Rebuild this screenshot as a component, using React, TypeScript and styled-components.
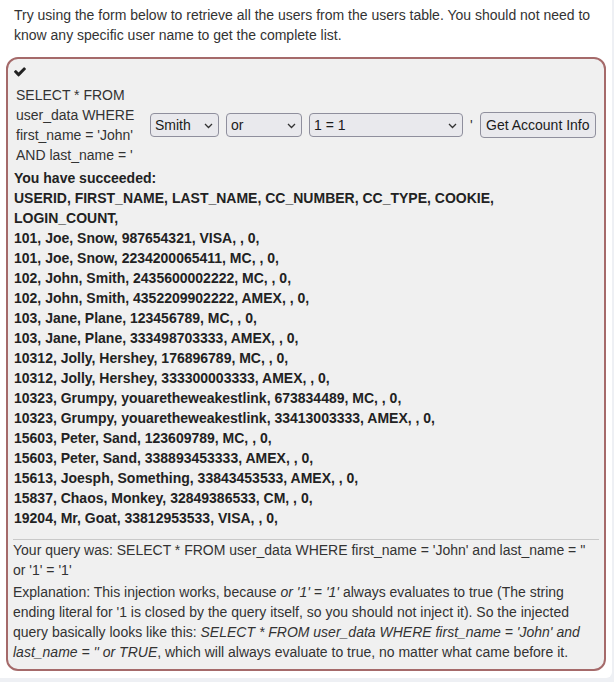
import React from "react";
import styled, { createGlobalStyle } from "styled-components";

const Global = createGlobalStyle`
  html, body { margin: 0; padding: 0; }
  body {
    background: #eef0f4;
    font-family: "Liberation Sans Narrow", "Arial Narrow", "Liberation Sans", Arial, sans-serif;
    font-size: 14px;
    color: #333;
  }
`;

const Panel = styled.div`
  width: 612px;
  box-sizing: border-box;
  background: #ffffff;
  padding: 5px 0 7px 0;
  border-radius: 0 0 6px 0;
`;

const Intro = styled.p`
  margin: 0 0 12px 0;
  padding: 0 14px;
  line-height: 20px;
`;

const AttackBox = styled.div`
  margin: 0 6px;
  border: 2px solid #a56a6a;
  border-radius: 12px;
  background: #f0f0f0;
  padding: 3px 5px 7px 5px;
`;

const CheckLine = styled.div`
  height: 20px;
  display: flex;
  align-items: center;
  padding-left: 1px;
  margin-bottom: 3px;
  color: #222;
`;

const FormRow = styled.div`
  display: flex;
  align-items: center;
  gap: 7px;
  padding-left: 3px;
`;

const QueryLabel = styled.div`
  width: 130px;
  line-height: 20px;
  margin-right: -3px;
`;

const SelectWrap = styled.div<{ $w: number }>`
  position: relative;
  width: ${(p) => p.$w}px;
  height: 24px;
`;

const Select = styled.select`
  appearance: none;
  -webkit-appearance: none;
  width: 100%;
  height: 100%;
  box-sizing: border-box;
  margin: 0;
  background: #e9e9ed;
  border: 1px solid #8f8f9d;
  border-radius: 4px;
  padding: 0 0 0 4px;
  font-family: "Liberation Sans", Arial, sans-serif;
  font-size: 14px;
  color: #1b1b1b;
`;

const Chevron = styled.svg`
  position: absolute;
  right: 6px;
  top: 10px;
  width: 9px;
  height: 6px;
  pointer-events: none;
`;

const Quote = styled.span`
  width: 3px;
  line-height: 20px;
`;

const Button = styled.button`
  height: 26px;
  margin: 0;
  box-sizing: border-box;
  background: #e9e9ed;
  border: 1px solid #8f8f9d;
  border-radius: 4px;
  padding: 0 5px;
  font-family: "Liberation Sans", Arial, sans-serif;
  font-size: 14px;
  color: #1b1b1b;
`;

const Results = styled.div`
  margin-top: 3px;
  font-family: "Liberation Sans", Arial, sans-serif;
  font-weight: bold;
  font-size: 14px;
  line-height: 20px;
  color: #222;
  padding-left: 1px;
`;

const Rule = styled.hr`
  margin: 11px 0 0 0;
  border: 0;
  border-top: 1px solid #c9c9c9;
  height: 0;
`;

const Output = styled.div`
  line-height: 20px;
`;

const Explanation = styled.div`
  margin-top: 2px;
  line-height: 20px;
`;

const rows = [
  "101, Joe, Snow, 987654321, VISA, , 0,",
  "101, Joe, Snow, 2234200065411, MC, , 0,",
  "102, John, Smith, 2435600002222, MC, , 0,",
  "102, John, Smith, 4352209902222, AMEX, , 0,",
  "103, Jane, Plane, 123456789, MC, , 0,",
  "103, Jane, Plane, 333498703333, AMEX, , 0,",
  "10312, Jolly, Hershey, 176896789, MC, , 0,",
  "10312, Jolly, Hershey, 333300003333, AMEX, , 0,",
  "10323, Grumpy, youaretheweakestlink, 673834489, MC, , 0,",
  "10323, Grumpy, youaretheweakestlink, 33413003333, AMEX, , 0,",
  "15603, Peter, Sand, 123609789, MC, , 0,",
  "15603, Peter, Sand, 338893453333, AMEX, , 0,",
  "15613, Joesph, Something, 33843453533, AMEX, , 0,",
  "15837, Chaos, Monkey, 32849386533, CM, , 0,",
  "19204, Mr, Goat, 33812953533, VISA, , 0,",
];

function ChevronIcon() {
  return (
    <Chevron viewBox="0 0 9 6">
      <path d="M1 1 L4.5 4.5 L8 1" fill="none" stroke="#333" strokeWidth="1.3" />
    </Chevron>
  );
}

function Dropdown({ w, value, options }: { w: number; value: string; options: string[] }) {
  return (
    <SelectWrap $w={w}>
      <Select defaultValue={value}>
        {options.map((o, i) => (
          <option key={i} value={o}>
            {o}
          </option>
        ))}
      </Select>
      <ChevronIcon />
    </SelectWrap>
  );
}

export default function App() {
  return (
    <>
      <Global />
      <Panel>
        <Intro>
          Try using the form below to retrieve all the users from the users table. You should not need to
          know any specific user name to get the complete list.
        </Intro>
        <AttackBox>
          <CheckLine>
            <svg width="12" height="12" viewBox="120 300 1560 1300">
              <path
                fill="#222"
                d="M1671 566q0 40-28 68l-724 724-136 136q-28 28-68 28t-68-28l-136-136-362-362q-28-28-28-68t28-68l136-136q28-28 68-28t68 28l294 295 656-657q28-28 68-28t68 28l136 136q28 28 28 68z"
              />
            </svg>
          </CheckLine>
          <FormRow>
            <QueryLabel>SELECT * FROM user_data WHERE first_name = 'John' AND last_name = '</QueryLabel>
            <Dropdown w={69} value="Smith" options={["Smith", "'"]} />
            <Dropdown w={76} value="or" options={["or", "and"]} />
            <Dropdown w={154} value="1 = 1" options={["1 = 1", "1 = 2"]} />
            <Quote>'</Quote>
            <Button>Get Account Info</Button>
          </FormRow>
          <Results>
            <div>You have succeeded:</div>
            <div>USERID, FIRST_NAME, LAST_NAME, CC_NUMBER, CC_TYPE, COOKIE, LOGIN_COUNT,</div>
            {rows.map((r, i) => (
              <div key={i}>{r}</div>
            ))}
          </Results>
          <Rule />
          <Output>
            Your query was: SELECT * FROM user_data WHERE first_name = 'John' and last_name = '' or '1' = '1'
          </Output>
          <Explanation>
            Explanation: This injection works, because <i>or '1' = '1'</i> always evaluates to true (The string
            ending literal for '1 is closed by the query itself, so you should not inject it). So the injected
            query basically looks like this:{" "}
            <i>SELECT * FROM user_data WHERE first_name = 'John' and last_name = '' or TRUE</i>, which will always
            evaluate to true, no matter what came before it.
          </Explanation>
        </AttackBox>
      </Panel>
    </>
  );
}
